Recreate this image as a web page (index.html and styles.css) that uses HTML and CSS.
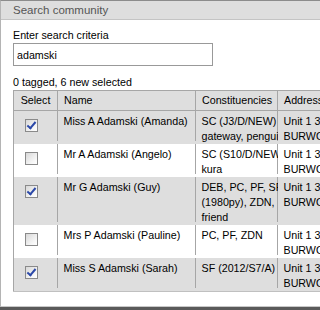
FILE: index.html
```html
<!DOCTYPE html>
<html lang="en">
<head>
  <meta charset="UTF-8" />
  <meta name="viewport" content="width=device-width, initial-scale=1.0"/>
  <title>Search community</title>
  <link rel="stylesheet" href="styles.css">
</head>
<body>
  <div class="dialog">
    <div class="dialog-title">Search community</div>
    <div class="dialog-body">
      <label class="field-label" for="criteria">Enter search criteria</label>
      <input type="text" id="criteria" class="search-input" value="adamski" />
      <div class="status">0 tagged, 6 new selected</div>

      <table class="results">
        <colgroup>
          <col class="col-select">
          <col class="col-name">
          <col class="col-const">
          <col class="col-addr">
        </colgroup>
        <thead>
          <tr>
            <th class="select">Select</th>
            <th>Name</th>
            <th>Constituencies</th>
            <th>Address</th>
          </tr>
        </thead>
        <tbody>
          <tr class="odd">
            <td class="select"><input type="checkbox" checked /></td>
            <td class="name">Miss A Adamski (Amanda)</td>
            <td class="const"><div>SC (J3/D/NEW) gateway, penguin</div></td>
            <td>Unit 1 32 Smith St BURWOOD NSW 2134</td>
          </tr>
          <tr>
            <td class="select"><input type="checkbox" /></td>
            <td class="name">Mr A Adamski (Angelo)</td>
            <td class="const"><div>SC (S10/D/NEW) kura</div></td>
            <td>Unit 1 32 Smith St BURWOOD NSW 2134</td>
          </tr>
          <tr class="odd">
            <td class="select"><input type="checkbox" checked /></td>
            <td class="name">Mr G Adamski (Guy)</td>
            <td class="const"><div>DEB, PC, PF, SF (1980py), ZDN, friend</div></td>
            <td>Unit 1 32 Smith St BURWOOD NSW 2134</td>
          </tr>
          <tr>
            <td class="select"><input type="checkbox" /></td>
            <td class="name">Mrs P Adamski (Pauline)</td>
            <td class="const"><div>PC, PF, ZDN</div></td>
            <td>Unit 1 32 Smith St BURWOOD NSW 2134</td>
          </tr>
          <tr class="odd">
            <td class="select"><input type="checkbox" checked /></td>
            <td class="name">Miss S Adamski (Sarah)</td>
            <td class="const"><div>SF (2012/S7/A)</div></td>
            <td>Unit 1 32 Smith St BURWOOD NSW 2134</td>
          </tr>
        </tbody>
      </table>
    </div>
  </div>
</body>
</html>
```

FILE: styles.css
```css
html, body {
  margin: 0;
  padding: 0;
  overflow: hidden;
  background-color: #5a5a5a;
}
body {
  font-family: "Liberation Sans", Arial, sans-serif;
  font-size: 10.7px;
  color: #000;
}
.dialog {
  width: 460px;
  height: 305px;
  background-color: #fff;
  border-top: 1px solid #8c8c8c;
  border-left: 1px solid #b4b4b4;
  border-bottom: 1px solid #c8c8c8;
}
.dialog-title {
  height: 18px;
  line-height: 18px;
  padding-left: 12px;
  background-color: #dedede;
  border-bottom: 1px solid #c4c4c4;
  color: #555;
  font-size: 11.5px;
}
.dialog-body {
  padding: 8px 12px 0;
}
.field-label {
  display: block;
  line-height: 15px;
}
.search-input {
  box-sizing: border-box;
  width: 200px;
  height: 23px;
  margin: 0;
  padding: 0 3px;
  border: 1px solid #999;
  font-family: inherit;
  font-size: 10.7px;
  outline: none;
}
.status {
  margin-top: 9px;
  line-height: 15px;
}
.results {
  border-collapse: collapse;
  table-layout: fixed;
  width: 400px;
  border-left: 1px solid #a6a6a6;
  border-top: 1px solid #a6a6a6;
  border-bottom: 1px solid #c0c0c0;
}
.col-select { width: 44px; }
.col-name { width: 138px; }
.col-const { width: 82px; }
.col-addr { width: 136px; }
.results th {
  height: 19px;
  padding: 0 0 0 6px;
  background-color: #dedede;
  border-right: 1px solid #a6a6a6;
  border-bottom: 1px solid #a6a6a6;
  font-weight: normal;
  text-align: left;
  line-height: 15px;
  white-space: nowrap;
  overflow: hidden;
}
.results th.select {
  text-align: center;
  padding: 0;
}
.results td {
  padding: 3px 6px 0;
  height: 30px;
  vertical-align: top;
  line-height: 15px;
  background-image: linear-gradient(#a6a6a6, #a6a6a6);
  background-repeat: no-repeat;
  background-position: right top;
  background-size: 1px calc(100% - 3px);
  overflow: hidden;
}
.results tr.odd td {
  background-color: #dedede;
}
.results td.select {
  padding-left: 7px;
}
.results td.name {
  padding-right: 1px;
}
.results td.const {
  padding-right: 1px;
}
.results td.const div {
  width: 92px;
}
.results input[type="checkbox"] {
  -webkit-appearance: none;
  appearance: none;
  position: relative;
  width: 13px;
  height: 13px;
  margin: 5px 0 0 4px;
  border: 1px solid #8a8a8a;
  background: linear-gradient(135deg, #d8d8d8, #f6f6f6 70%, #fff);
}
.results input[type="checkbox"]:checked::after {
  content: "";
  position: absolute;
  left: 3px;
  top: 0;
  width: 3px;
  height: 7px;
  border-right: 2px solid #2b48a8;
  border-bottom: 2px solid #2b48a8;
  transform: rotate(40deg);
}
```
